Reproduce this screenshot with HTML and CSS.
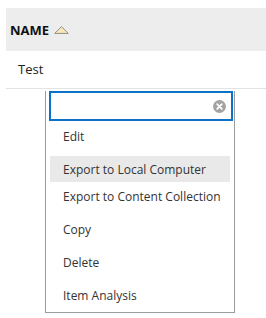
FILE: index.html
```html
<!DOCTYPE html>
<html>
<head>
    <meta charset="utf-8">
    <title>Items</title>
    <link rel="stylesheet" href="styles.css">
</head>
<body>
    <div class="grid">
        <div class="grid-head">
            <span class="col-name">NAME</span>
            <svg class="sort-icon" width="15" height="8" viewBox="0 0 15 8">
                <polygon points="7.5,0.7 14.3,7.4 0.7,7.4" fill="#f9e8b6" stroke="#8e8e8e" stroke-width="1"/>
            </svg>
        </div>
        <div class="grid-row">Test</div>
    </div>

    <div class="menu">
        <div class="menu-search">
            <input type="text" class="search-input">
            <span class="clear-btn">
                <svg width="13" height="13" viewBox="0 0 13 13">
                    <circle cx="6.5" cy="6.5" r="6.5" fill="#a3a3a3"/>
                    <path d="M4.2 4.2 L8.8 8.8 M8.8 4.2 L4.2 8.8" stroke="#fff" stroke-width="1.8" stroke-linecap="round"/>
                </svg>
            </span>
        </div>
        <ul class="menu-list">
            <li>Edit</li>
            <li class="active">Export to Local Computer</li>
            <li>Export to Content Collection</li>
            <li>Copy</li>
            <li>Delete</li>
            <li>Item Analysis</li>
        </ul>
    </div>
</body>
</html>
```

FILE: styles.css
```css
*{
    margin: 0;
    padding: 0;
    box-sizing: border-box;
}
body{
    font-family: "Open Sans", "Liberation Sans", sans-serif;
    background: #fff;
    color: #222;
}
.grid{
    margin: 8px 0 0 6px;
}
.grid-head{
    height: 43px;
    background-color: #ededed;
    display: flex;
    align-items: center;
    padding-left: 4px;
}
.grid-head .col-name{
    font-size: 13px;
    font-weight: bold;
    color: #111;
}
.grid-head .sort-icon{
    margin-left: 5px;
    margin-top: 1px;
}
.grid-row{
    height: 38px;
    line-height: 37px;
    padding-left: 12px;
    font-size: 13px;
    color: #222;
    border-bottom: 1px solid #e3e3e3;
}
.menu{
    position: absolute;
    left: 45px;
    top: 91px;
    width: 190px;
    height: 222px;
    background: #fff;
    border: 1px solid #9c9c9c;
    border-top: 0;
    padding: 0 4px;
}
.menu-search{
    position: relative;
    margin-left: -1px;
    width: 184px;
}
.search-input{
    display: block;
    width: 184px;
    height: 30px;
    border: 2px solid #0a72c9;
    outline: none;
    font-size: 12px;
    padding: 0 24px 0 6px;
}
.clear-btn{
    position: absolute;
    right: 7px;
    top: 9px;
    width: 13px;
    height: 13px;
}
.clear-btn svg{
    display: block;
}
.menu-list{
    list-style: none;
    padding-top: 2px;
}
.menu-list li{
    height: 26px;
    line-height: 27px;
    padding-left: 13px;
    font-size: 12px;
    color: #333;
    margin-bottom: 7px;
    white-space: nowrap;
}
.menu-list li.active{
    background-color: #e9e9e9;
    margin-bottom: 1px;
}
```
